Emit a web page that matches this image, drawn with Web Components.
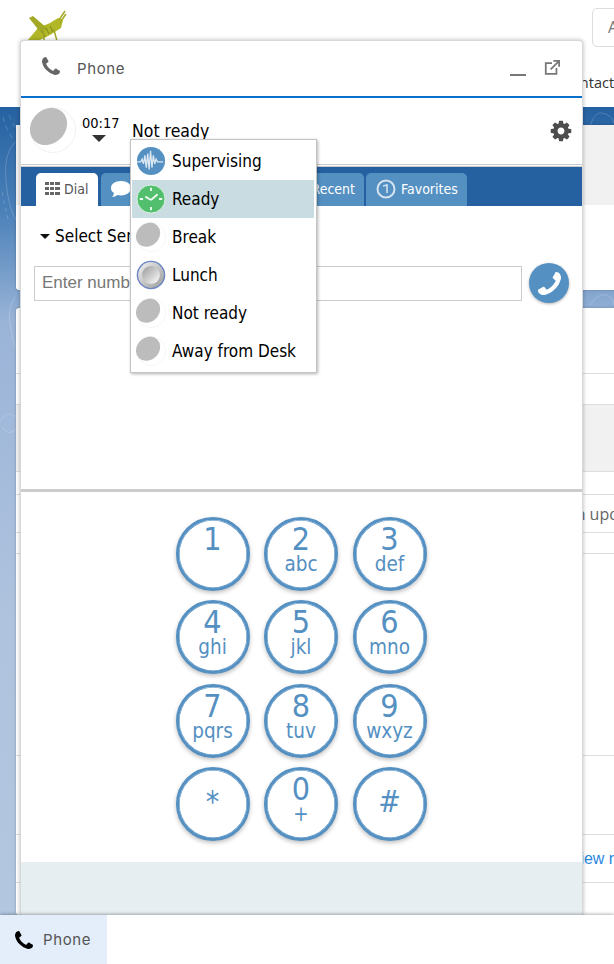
<!DOCTYPE html>
<html>
<head>
<meta charset="utf-8">
<title>Phone</title>
<style>
  html, body { margin: 0; padding: 0; height: 964px; overflow: hidden; background: #fff; }
  body { position: relative; font-family: "DejaVu Sans Condensed", "DejaVu Sans", sans-serif; font-stretch: condensed; }
</style>
</head>
<body>
<app-backdrop></app-backdrop>
<phone-window>
  <status-menu slot="menu"></status-menu>
</phone-window>
<task-bar></task-bar>

<script>
const PHONE = 'M1408 1112q0 27-10 70.5t-21 68.5q-21 50-122 106-94 51-186 51-27 0-53-3.5t-57.5-12.5-47-14.5-55.5-20.5-49-18q-98-35-175-83-127-79-264-216t-216-264q-48-77-83-175-3-9-18-49t-20.5-55.5-14.5-47-12.5-57.5-3.5-53q0-92 51-186 56-101 106-122 25-11 68.5-21t70.5-10q14 0 21 3 18 6 53 76 11 19 30 54t35 63.5 31 53.5q3 4 17.5 25t21.5 35.5 7 28.5q0 20-28.5 50t-62 55-62 53-28.5 46q0 9 5 22.5t8.5 20.5 14 24 11.5 19q76 137 174 235t235 174q2 1 19 11.5t24 14 20.5 8.5 22.5 5q18 0 46-28.5t53-62 55-62 50-28.5q14 0 28.5 7t35.5 21.5 25 17.5q25 15 53.5 31t63.5 35 54 30q70 35 76 53 3 7 3 21z';
const COG = 'M1152 896q0-106-75-181t-181-75-181 75-75 181 75 181 181 75 181-75 75-181zm512-109v222q0 12-8 23t-20 13l-185 28q-19 54-39 91 35 50 107 138 10 12 10 25t-9 23q-27 37-99 108t-94 71q-12 0-26-9l-138-108q-44 23-91 38-16 136-29 186-7 28-36 28h-222q-14 0-24.5-8.5t-11.5-21.5l-28-184q-49-16-90-37l-141 107q-10 9-25 9-14 0-25-11-126-114-165-168-7-10-7-23 0-12 8-23 15-21 51-66.5t54-70.5q-27-50-41-99l-183-27q-13-2-21-12.5t-8-23.5v-222q0-12 8-23t19-13l186-28q14-46 39-92-40-57-107-138-10-12-10-24 0-10 9-23 26-36 98.5-107.5t94.5-71.5q13 0 26 10l138 107q44-23 91-38 16-136 29-186 7-28 36-28h222q14 0 24.5 8.5t11.5 21.5l28 184q49 16 90 37l142-107q9-9 24-9 13 0 25 10 129 119 165 170 7 8 7 22 0 12-8 23-15 21-51 66.5t-54 70.5q26 50 41 98l183 28q13 2 21 12.5t8 23.5z';

const phoneIcon = (size, color, flip) =>
  `<svg width="${size}" height="${size}" viewBox="0 0 1408 1408" style="display:block${flip ? ';transform:scaleX(-1)' : ''}"><path fill="${color}" d="${PHONE}"/></svg>`;

// grey "no status" disc
const moon = size =>
  `<svg width="${size}" height="${size}" viewBox="0 0 46 46" style="display:block"><circle cx="23" cy="23" r="22.5" fill="#fff" stroke="#f1f1f1"/><ellipse cx="18.5" cy="19.5" rx="20" ry="17" transform="rotate(-45 18.5 19.5)" fill="#bcbcbc"/></svg>`;

class AppBackdrop extends HTMLElement {
  constructor() {
    super();
    this.attachShadow({ mode: 'open' });
    this.shadowRoot.innerHTML = `
      <style>
        :host { display: flex; flex-direction: column; height: 964px; overflow: hidden; font-family: "Open Sans", sans-serif; font-stretch: normal; color: #444; }
        header { height: 107px; flex: none; background: #fff; display: flex; flex-direction: column; }
        .top { display: flex; height: 76px; padding: 8px 0 0 20px; box-sizing: border-box; justify-content: space-between; }
        .logo { display: block; }
        .search { width: 60px; height: 39px; margin-right: -38px; box-sizing: border-box; border: 1px solid #ddd; border-radius: 5px; padding: 7px 0 0 15px; color: #777; font-size: 16px; background: #fff; }
        .nav { font-size: 14.5px; color: #333; padding-left: 562px; white-space: nowrap; line-height: 14px; }
        .band { flex: 1; position: relative; background: linear-gradient(#2561a1 0, #4a80b8 12%, #9ab4d8 25%, #afc3de 60%, #b4c7e1 100%); padding: 18px 0 0 16px; display: flex; flex-direction: column; overflow: hidden; }
        .swirl { position: absolute; inset: 0; }
        .card { position: relative; background: #fff; width: 700px; box-shadow: 0 0 3px rgba(0,0,0,.25); border-radius: 3px 0 0 3px; }
        .card.a { height: 165px; margin-bottom: 18px; }
        .card.a .grey { height: 80px; background: #f1f1f1; }
        .row { box-sizing: border-box; border-top: 1px solid #ddd; font-size: 16px; white-space: nowrap; display: flex; align-items: center; }
        .row:first-child { border-top: 0; }
        .row.grey { background: #f1f1f1; }
        .link { color: #2a86dc; font-family: "Liberation Sans", sans-serif; padding-left: 554px; }
        .muted { color: #666; padding-left: 550px; }
      </style>
      <header>
        <div class="top">
          <svg class="logo" width="50" height="36" viewBox="20 8 50 36">
            <path fill="#b2b728" d="M27 41L38 28 50 23 58 18 63 20 61 28 50 35 40 40 31 43Z"/>
            <path fill="#a3a924" d="M29 18L33 16 48 29 41 33Z"/>
            <path fill="none" stroke="#a3a924" stroke-width="1.500" d="M59 20L65 11M61 21L66 14M50 33L54 30 57 41M44 36L44 42"/>
            <path fill="none" stroke="#7e8a1c" stroke-width="1" d="M42 31L45 37M46 28L49 34M50 26L53 32M60 22L61 23"/>
          </svg>
          <div class="search">A</div>
        </div>
        <div class="nav">Contact</div>
      </header>
      <div class="band">
        <svg class="swirl" width="614" height="808" viewBox="0 0 614 808" fill="none" stroke="rgba(255,255,255,.18)">
          <path d="M3 10q3 14 12 24M9 8q3 8 7 13" stroke-dasharray="5 4"/>
          <path d="M15 35q-12 12-9 40t10 38"/>
          <path d="M2 85l7 32" stroke-dasharray="4 4"/>
          <path d="M15 190q-8 12-5 28t5 22"/>
          <path d="M16 310q-9-8-16 4M16 322q-8 8-14-2"/>
          <path d="M590 18q6-14 12-12 10 2 12 10"/>
          <path d="M590 198q8-12 16-10t8 10"/>
        </svg>
        <div class="card a"><div class="grey"></div></div>
        <div class="card b">
          <div class="row" style="height:65px"></div>
          <div class="row" style="height:31px"></div>
          <div class="row grey" style="height:67px"></div>
          <div class="row" style="height:23px"></div>
          <div class="row muted" style="height:38px">on update</div>
          <div class="row" style="height:21px"></div>
          <div class="row" style="height:202px"></div>
          <div class="row" style="height:79px"></div>
          <div class="row link" style="height:48px">View report</div>
          <div class="row" style="height:33px"></div>
        </div>
      </div>`;
  }
}
customElements.define('app-backdrop', AppBackdrop);

class DialKey extends HTMLElement {
  constructor() {
    super();
    this.attachShadow({ mode: 'open' });
    const symbol = this.hasAttribute('symbol');
    this.shadowRoot.innerHTML = `
      <style>
        :host { display: block; width: 74px; height: 74px; box-sizing: border-box; border: 3px solid #5490c2; border-radius: 50%; background: #fff; box-shadow: 0 2px 4px rgba(0,0,0,.25), inset 0 0 0 .6px #5490c2; color: #5490c2; text-align: center; overflow: hidden; }
        .d { font-size: 32px; line-height: 34px; margin-top: 2px; }
        .sym { margin-top: 15px; font-size: 30px; }
        .l { font-size: 20.5px; line-height: 20px; margin-top: -2px; }
      </style>
      <div class="d ${symbol ? 'sym' : ''}">${this.getAttribute('digit')}</div>
      <div class="l">${this.getAttribute('letters') || ''}</div>`;
  }
}
customElements.define('dial-key', DialKey);

class PhoneTab extends HTMLElement {
  constructor() {
    super();
    this.attachShadow({ mode: 'open' });
    this.shadowRoot.innerHTML = `
      <style>
        :host { display: flex; align-items: center; gap: 4px; height: 33px; box-sizing: border-box; padding: 0 9px 2px; background: #5490c2; color: #fff; border-radius: 5px 5px 0 0; font-size: 14px; }
        :host([active]) { background: #fff; color: #555; }
      </style>
      <slot name="icon"></slot><slot></slot>`;
  }
}
customElements.define('phone-tab', PhoneTab);

class PhoneWindow extends HTMLElement {
  constructor() {
    super();
    this.attachShadow({ mode: 'open' });
    const keys = [['1',''],['2','abc'],['3','def'],['4','ghi'],['5','jkl'],['6','mno'],['7','pqrs'],['8','tuv'],['9','wxyz'],['*','',1],['0','+'],['#','',1]];
    this.shadowRoot.innerHTML = `
      <style>
        :host { position: absolute; left: 20px; top: 40px; width: 563px; height: 875px; box-sizing: border-box; display: flex; flex-direction: column; background: #fff; border: 1px solid #d8d8d8; border-bottom: 0; border-radius: 4px 4px 0 0; box-shadow: 0 0 4px rgba(0,0,0,.28); color: #000; }
        .title { height: 55px; flex: none; display: flex; align-items: center; padding: 0 22px 0 21px; border-bottom: 2px solid #0a6fc9; color: #555; font: 15px "Inter", "Open Sans", sans-serif; letter-spacing: .6px; }
        .title .name { margin-left: 17px; flex: 1; }
        .title svg { display: block; }
        .title .ph { margin-top: -6px; }
        .status { height: 69px; flex: none; display: flex; box-sizing: border-box; padding: 9px 9px 0 9px; border-bottom: 3px double #c9c9c9; }
        .timer { margin-left: 6px; font-size: 14.5px; width: 50px; padding-top: 7px; line-height: 18px; }
        .caret { width: 0; height: 0; margin: 3px 0 0 10px; border: 7px solid transparent; border-top-color: #333; border-bottom: 0; }
        .state { font-size: 17.5px; padding-top: 13px; flex: 1; line-height: 22px; }
        .gear { margin-top: 12px; }
        .tabs { height: 39px; flex: none; background: #2561a1; display: flex; align-items: flex-end; gap: 3px; padding-left: 15px; box-sizing: border-box; }
        .body { height: 286px; flex: none; box-sizing: border-box; padding: 19px 13px 0; border-bottom: 3px solid #ccc; }
        .sel { font-size: 17px; display: flex; align-items: center; gap: 5px; height: 22px; padding-left: 6px; white-space: nowrap; }
        .sel i { width: 0; height: 0; border: 5px solid transparent; border-top-color: #111; border-bottom: 0; }
        .line { display: flex; align-items: center; margin-top: 16px; gap: 7px; }
        input { width: 488px; height: 35px; box-sizing: border-box; border: 1px solid #ccc; padding: 0 7px; font: 17px "Liberation Sans", sans-serif; outline: 0; }
        input::placeholder { color: #777; opacity: 1; }
        .call { width: 40px; height: 40px; border-radius: 50%; background: #5490c2; display: flex; align-items: center; justify-content: center; box-shadow: 0 1px 3px rgba(0,0,0,.3); }
        .pad { height: 370px; flex: none; box-sizing: border-box; padding: 25px 1px 0 0; display: grid; grid-template-columns: repeat(3, 74px); grid-auto-rows: 74px; column-gap: 14.5px; row-gap: 9.3px; justify-content: center; }
        .foot { flex: 1; background: #e6eef1; }
      </style>
      <div class="title">
        <span class="ph">${phoneIcon(18, '#666')}</span>
        <span class="name">Phone</span>
        <svg width="20" height="20" viewBox="0 0 20 20" style="margin-right:15px;margin-top:-2px"><path d="M1 17h16" stroke="#777" stroke-width="2"/></svg>
        <svg width="16" height="16" viewBox="0 0 18 18" fill="none" stroke="#777" stroke-width="2" style="margin-top:-2px"><path d="M9 3.500H2v12h12V9"/><path d="M7.500 10.500L16.500 1.500M10.500 1h6.500v6.500"/></svg>
      </div>
      <div class="status">
        ${moon(46)}
        <div class="timer">00:17<div class="caret"></div></div>
        <div class="state">Not ready</div>
        <svg class="gear" width="24" height="24" viewBox="0 0 1792 1792"><path fill="#4d4d4d" d="${COG}"/></svg>
      </div>
      <div class="tabs">
        <phone-tab active style="width:62px">
          <svg slot="icon" width="15" height="13" viewBox="0 0 15 13"><path fill="#666" d="M0 0h4v3H0zM5 0h4v3H5zM10 0h5v3h-5zM0 5h4v3H0zM5 5h4v3H5zM10 5h5v3h-5zM0 10h4v3H0zM5 10h4v3H5zM10 10h5v3h-5z"/></svg>
          Dial
        </phone-tab>
        <phone-tab style="width:120px">
          <svg slot="icon" width="22" height="18" viewBox="0 0 22 18"><path fill="#fff" d="M11 1C5 1 1 4 1 8c0 2 1 4 3 5-.2 1.500-1 3-2 4 2 0 4-1 5.500-2 1 .2 2.500.4 3.500.4 6 0 10-3.500 10-7.400S17 1 11 1z"/></svg>
        </phone-tab>
        <phone-tab style="width:140px;justify-content:flex-end">Recent</phone-tab>
        <phone-tab style="width:101px;padding-left:10px;margin-left:-1px;gap:5px">
          <svg slot="icon" width="20" height="20" viewBox="0 0 20 20" fill="none" stroke="#d5e4f0" stroke-width="2"><circle cx="10" cy="10" r="8.500"/><path d="M7 7l4-1v8" stroke-width="1.500"/></svg>
          Favorites
        </phone-tab>
      </div>
      <div class="body">
        <div class="sel"><i></i>Select Service</div>
        <div class="line">
          <input placeholder="Enter number">
          <div class="call">${phoneIcon(23, '#fff', true)}</div>
        </div>
      </div>
      <div class="pad">
        ${keys.map(k => `<dial-key digit="${k[0]}" letters="${k[1]}"${k[2] ? ' symbol' : ''}></dial-key>`).join('')}
      </div>
      <div class="foot"></div>
      <slot name="menu"></slot>`;
  }
}
customElements.define('phone-window', PhoneWindow);

class StatusItem extends HTMLElement {
  constructor() {
    super();
    this.attachShadow({ mode: 'open' });
    this.shadowRoot.innerHTML = `
      <style>
        :host { display: flex; align-items: center; height: 38px; padding-left: 4px; gap: 6px; font-size: 17px; color: #000; white-space: nowrap; }
        :host([selected]) { background: #c8dce2; }
      </style>
      <slot name="icon"></slot><slot></slot>`;
  }
}
customElements.define('status-item', StatusItem);

class StatusMenu extends HTMLElement {
  constructor() {
    super();
    this.attachShadow({ mode: 'open' });
    const ticks = 'M16 4v3.500M16 24.500v3.500M4 16h3.500M24.500 16h3.500';
    this.shadowRoot.innerHTML = `
      <style>
        :host { position: absolute; left: 109px; top: 98px; width: 187px; height: 234px; box-sizing: border-box; display: flex; flex-direction: column; background: #fff; border: 1px solid #c4c4c4; box-shadow: 1px 1px 3px rgba(0,0,0,.3); padding: 2px 2px 0 1px; }
      </style>
      <status-item>
        <svg slot="icon" width="30" height="30" viewBox="0 0 32 32"><circle cx="16" cy="16" r="15" fill="#5490c2"/><path fill="none" stroke="#dbe8f2" stroke-width="1.400" d="M1 17h4l1.500-3 1.500 5 1.500-9 1.500 13 1.500-15 1.500 17 1.500-20 1.500 18 1.500-13 1.500 9 1.500-5 1.500 3h6"/></svg>
        Supervising
      </status-item>
      <status-item selected>
        <svg slot="icon" width="30" height="30" viewBox="0 0 32 32"><circle cx="16" cy="16" r="15" fill="#52bf6e" stroke="#e3f3e8"/><path fill="none" stroke="#eef9f1" stroke-width="2" d="${ticks}M16 17l-6-3.500M16 17l7-6"/></svg>
        Ready
      </status-item>
      <status-item><span slot="icon">${moon(30)}</span>Break</status-item>
      <status-item>
        <svg slot="icon" width="30" height="30" viewBox="0 0 32 32"><defs><linearGradient id="g" x1="0" y1="0" x2="1" y2="1"><stop offset="0" stop-color="#f4f4f4"/><stop offset="1" stop-color="#999"/></linearGradient><linearGradient id="h" x1="0" y1="0" x2="1" y2="1"><stop offset="0" stop-color="#999"/><stop offset="1" stop-color="#fff"/></linearGradient></defs><circle cx="16" cy="16" r="14.500" fill="url(#g)" stroke="#6c86c4" stroke-width="1.500"/><circle cx="16" cy="16" r="9.500" fill="url(#h)"/></svg>
        Lunch
      </status-item>
      <status-item><span slot="icon">${moon(30)}</span>Not ready</status-item>
      <status-item><span slot="icon">${moon(30)}</span>Away from Desk</status-item>`;
  }
}
customElements.define('status-menu', StatusMenu);

class TaskBar extends HTMLElement {
  constructor() {
    super();
    this.attachShadow({ mode: 'open' });
    this.shadowRoot.innerHTML = `
      <style>
        :host { position: absolute; left: 0; right: 0; top: 915px; height: 49px; background: #fff; box-shadow: 0 -1px 3px rgba(0,0,0,.3); display: flex; }
        .item { width: 107px; box-sizing: border-box; background: #e3eefa; display: flex; align-items: center; gap: 10px; padding-left: 15px; color: #555; font: 15px "Inter", "Open Sans", sans-serif; letter-spacing: .6px; }
      </style>
      <div class="item">${phoneIcon(18, '#000')}Phone</div>`;
  }
}
customElements.define('task-bar', TaskBar);
</script>
</body>
</html>
